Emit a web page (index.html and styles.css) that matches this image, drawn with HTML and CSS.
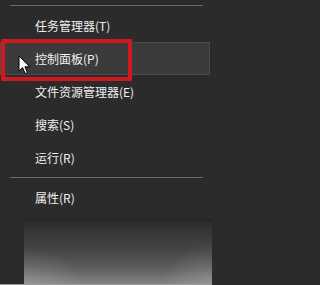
FILE: index.html
```html
<!DOCTYPE html>
<html lang="zh-CN">
<head>
<meta charset="utf-8">
<title>菜单</title>
<link rel="stylesheet" href="styles.css">
</head>
<body>
<div class="page">
  <div class="menu">
    <div class="sep sep-top"></div>
    <div class="item">任务管理器(T)</div>
    <div class="item item-hover">控制面板(P)</div>
    <div class="item">文件资源管理器(E)</div>
    <div class="item">搜索(S)</div>
    <div class="item">运行(R)</div>
    <div class="sep sep-mid"></div>
    <div class="item">属性(R)</div>
  </div>
  <div class="below">
    <div class="below-left"></div>
    <div class="below-shade"></div>
  </div>
  <div class="bottom-line"></div>

  <div class="mark"></div>
  <svg class="cursor" width="13" height="20" viewBox="0 0 13 20">
    <path d="M1 1 L1 16 L4.6 12.6 L7.2 18.6 L9.4 17.6 L6.9 11.8 L11.6 11.8 Z" fill="#ffffff" stroke="#000000" stroke-width="1" stroke-linejoin="miter"/>
  </svg>
</div>
</body>
</html>
```

FILE: styles.css
```css
html, body {
  margin: 0;
  padding: 0;
  background: #2b2b2b;
}

.page {
  position: relative;
  width: 212px;
  height: 285px;
  overflow: hidden;
  background: #2b2b2b;
  font-family: "Noto Sans CJK SC", "Noto Sans", "Liberation Sans", sans-serif;
}

.menu {
  display: flex;
  flex-direction: column;
  padding: 5px 0 4px 0;
  height: 218px;
  box-sizing: border-box;
}

.sep {
  height: 1px;
  background: #6a6a6a;
  margin-left: 10px;
  margin-right: 9px;
}

.sep-top {
  margin-bottom: 3px;
}

.sep-mid {
  margin-top: 3px;
  margin-bottom: 3px;
}

.item {
  height: 33px;
  display: flex;
  align-items: center;
  padding-left: 35px;
  font-size: 12px;
  color: #f0f0f0;
  box-sizing: border-box;
  margin-right: 2px;
}

.item-hover {
  background: #3b3b3b;
  border: 1px solid #4b4b4b;
  padding-left: 34px;
}

.below {
  display: flex;
  height: 66px;
}

.below-left {
  width: 24px;
  background: #2a2a2a;
}

.below-shade {
  flex: 1;
  background:
    radial-gradient(ellipse 60px 36px at 0% 100%, rgba(190,190,190,0.3), rgba(190,190,190,0) 100%),
    radial-gradient(ellipse 50px 40px at 100% 100%, rgba(190,190,190,0.3), rgba(190,190,190,0) 100%),
    linear-gradient(#232323 0px, #2f2f2f 6px, #3b3b3b 18px, #474747 34px, #5d5d5d 50px, #838383 66px);
}

.bottom-line {
  height: 1px;
  background: #9a9a9a;
}

.mark {
  position: absolute;
  left: 1px;
  top: 39px;
  width: 131px;
  height: 42px;
  border: 4px solid #cf1820;
  box-sizing: border-box;
  border-radius: 1px;
}

.cursor {
  position: absolute;
  left: 18px;
  top: 55px;
}
```
